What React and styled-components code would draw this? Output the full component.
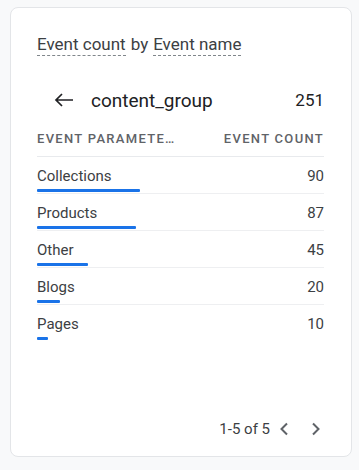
import React from "react";
import styled, { createGlobalStyle } from "styled-components";

const Global = createGlobalStyle`
  html, body { margin: 0; padding: 0; background: #f8f9fa; }
  body { font-family: Roboto, "Noto Sans", sans-serif; color: #3c4043; }
`;

const Page = styled.div`
  padding: 7px 7px 13px 10px;
`;

const Card = styled.div`
  box-sizing: border-box;
  width: 342px;
  height: 450px;
  background: #fff;
  border: 1px solid #e3e5e8;
  border-radius: 8px;
  padding: 26px 27px 17px 26px;
  display: flex;
  flex-direction: column;
`;

const Title = styled.div`
  font-size: 17px;
  line-height: 20px;
  color: #3c4043;
  display: flex;
  gap: 5px;
`;

const Dashed = styled.span`
  border-bottom: 1px dashed #80868b;
  padding-bottom: 1px;
`;

const Summary = styled.div`
  display: flex;
  align-items: center;
  margin-top: 29px;
  height: 30px;
`;

const Back = styled.span`
  width: 54px;
  padding-left: 17px;
  box-sizing: border-box;
  display: flex;
  align-items: center;
`;

const Dim = styled.span`
  font-size: 19px;
  color: #202124;
  flex: 1;
`;

const Total = styled.span`
  font-size: 17px;
  color: #202124;
`;

const Header = styled.div`
  display: flex;
  justify-content: space-between;
  margin-top: 16px;
  padding-bottom: 9px;
  border-bottom: 1px solid #e8eaed;
  font-size: 13px;
  font-weight: 500;
  letter-spacing: 1.3px;
  color: #5f6368;
  line-height: 16px;
`;

const Row = styled.div`
  position: relative;
  display: flex;
  justify-content: space-between;
  height: 37px;
  padding-top: 10px;
  box-sizing: border-box;
  font-size: 15px;
  line-height: 18px;
  color: #3c4043;
  border-bottom: 1px solid ${(p) => (p.$last ? "transparent" : "#eeeff1")};
`;

const Bar = styled.div`
  position: absolute;
  left: 0;
  bottom: 1px;
  height: 3px;
  background: #1a73e8;
  border-radius: 1px;
`;

const Footer = styled.div`
  margin-top: auto;
  display: flex;
  justify-content: flex-end;
  align-items: center;
  font-size: 15px;
  line-height: 20px;
  color: #3c4043;
`;

const Range = styled.span`
  margin-right: 6px;
`;

const Chevron = styled.span`
  width: 16px;
  display: flex;
  justify-content: center;
  & + & {
    margin-left: 16px;
  }
`;

const rows = [
  ["Collections", 90],
  ["Products", 87],
  ["Other", 45],
  ["Blogs", 20],
  ["Pages", 10],
];

export default function App() {
  return (
    <>
      <Global />
      <Page>
        <Card>
          <Title>
            <Dashed>Event count</Dashed>
            <span>by</span>
            <Dashed>Event name</Dashed>
          </Title>
          <Summary>
            <Back>
              <svg width="20" height="14" viewBox="0 0 20 14">
                <path d="M19 7H2M8 1L2 7l6 6" fill="none" stroke="#202124" strokeWidth="1.7" />
              </svg>
            </Back>
            <Dim>content_group</Dim>
            <Total>251</Total>
          </Summary>
          <Header>
            <span>EVENT PARAMETE…</span>
            <span>EVENT COUNT</span>
          </Header>
          {rows.map(([name, v], i) => (
            <Row key={name} $last={i === rows.length - 1}>
              <span>{name}</span>
              <span>{v}</span>
              <Bar style={{ width: `${(v / 251) * 287}px` }} />
            </Row>
          ))}
          <Footer>
            <Range>1-5 of 5</Range>
            <Chevron>
              <svg width="10" height="14" viewBox="0 0 10 14">
                <path d="M8 1.5L2.5 7 8 12.5" fill="none" stroke="#5f6368" strokeWidth="2" />
              </svg>
            </Chevron>
            <Chevron>
              <svg width="10" height="14" viewBox="0 0 10 14">
                <path d="M2 1.5L7.5 7 2 12.5" fill="none" stroke="#5f6368" strokeWidth="2" />
              </svg>
            </Chevron>
          </Footer>
        </Card>
      </Page>
    </>
  );
}
